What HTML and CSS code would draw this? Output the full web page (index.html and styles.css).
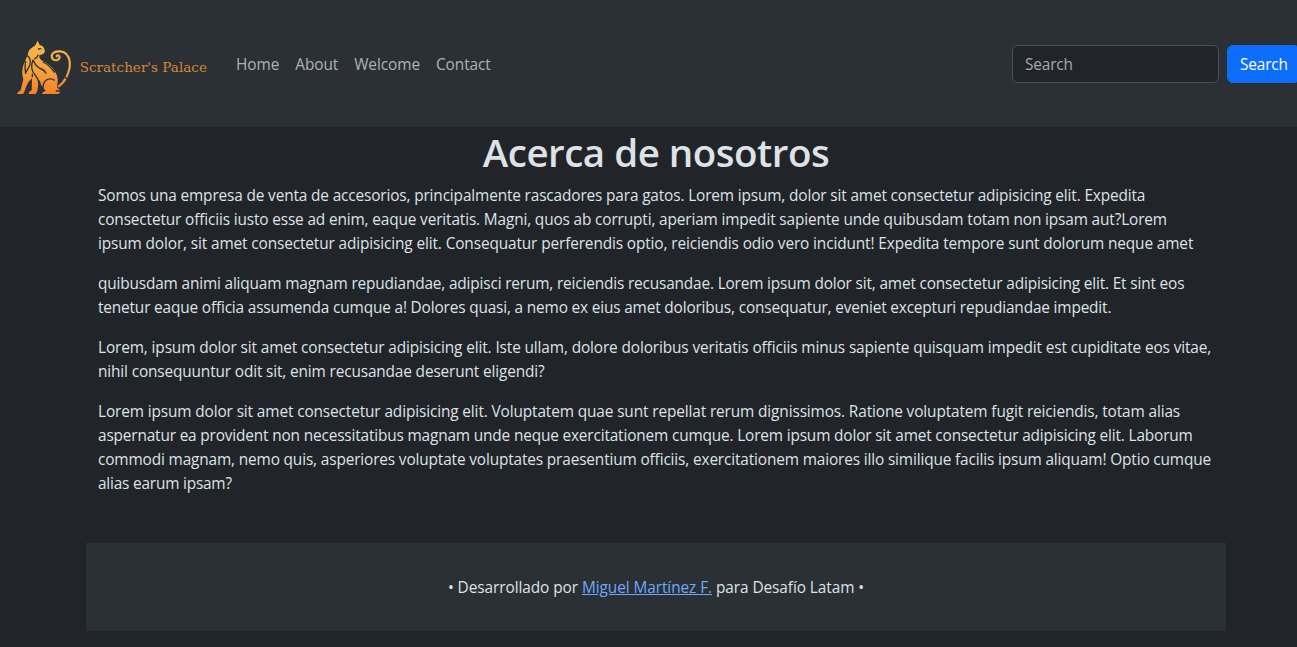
FILE: index.html
```html
<!DOCTYPE html>
<html lang="es">
<head>
<meta charset="utf-8">
<title>Acerca de nosotros</title>
<link rel="stylesheet" href="styles.css">
</head>
<body>
<div class="page">
<nav class="navbar">
  <a class="brand" href="#">
    <svg width="200" height="66" viewBox="0 0 600 198">
      <defs><linearGradient id="fur" gradientUnits="userSpaceOnUse" x1="0" y1="20" x2="0" y2="180"><stop offset="0" stop-color="#f9b94a"/><stop offset=".5" stop-color="#f5a53f"/><stop offset="1" stop-color="#f58229"/></linearGradient></defs>
      <path fill="url(#fur)" d="M83 20L89 33Q99 34 102 42L105 52Q102 62 88 64Q86 75 99 82Q124 93 137 116Q146 133 142 151L141 161Q151 166 150 174Q149 180 139 180H96L99 174L107 170Q94 158 87 140Q84 155 82 170L77 180H55L58 173L65 169L66 133Q55 142 49 156L43 173L39 180H21L24 174L32 169L40 136Q33 115 41 91Q48 76 53 62Q55 44 75 35Z"/>
      <path fill="none" stroke="url(#fur)" stroke-width="6.5" stroke-linecap="round" d="M146 157Q160 148 169 130Q182 104 179 82Q174 54 151 52Q127 51 125 66Q127 82 142 78Q153 72 147 65Q141 62 140 67"/>
      <path fill="none" stroke="#2b3035" stroke-width="4" d="M50 64Q64 70 60 92Q53 107 45 119M47 81Q43 105 48 119M69 77Q58 105 76 124Q87 137 88 153M70 79Q77 99 94 105Q105 109 108 119M85 62Q82 72 73 75M100 174Q96 149 108 139Q119 130 134 139M88 140Q90 160 103 171M98 84Q118 92 134 116M67 130L67 119M137 171H150M164 130L178 137M84 45L94 44"/>
      <text class="brand-name" x="209" y="115" textLength="382" lengthAdjust="spacingAndGlyphs">Scratcher's Palace</text>
    </svg>
  </a>
  <div class="links"><a href="#">Home</a><a href="#">About</a><a href="#">Welcome</a><a href="#">Contact</a></div>
  <form class="search"><input type="search" placeholder="Search" aria-label="Search"><button type="button">Search</button></form>
</nav>
<main class="container">
  <h1>Acerca de nosotros</h1>
  <p><span class="line l1">Somos una empresa de venta de accesorios, principalmente rascadores para gatos. Lorem ipsum, dolor sit amet consectetur adipisicing elit. Expedita</span>
  <span class="line l2">consectetur officiis iusto esse ad enim, eaque veritatis. Magni, quos ab corrupti, aperiam impedit sapiente unde quibusdam totam non ipsam aut?Lorem</span>
  <span class="line l3">ipsum dolor, sit amet consectetur adipisicing elit. Consequatur perferendis optio, reiciendis odio vero incidunt! Expedita tempore sunt dolorum neque amet</span></p>
  <p><span class="line l4">quibusdam animi aliquam magnam repudiandae, adipisci rerum, reiciendis recusandae. Lorem ipsum dolor sit, amet consectetur adipisicing elit. Et sint eos</span>
  <span class="line l5">tenetur eaque officia assumenda cumque a! Dolores quasi, a nemo ex eius amet doloribus, consequatur, eveniet excepturi repudiandae impedit.</span></p>
  <p><span class="line l6">Lorem, ipsum dolor sit amet consectetur adipisicing elit. Iste ullam, dolore doloribus veritatis officiis minus sapiente quisquam impedit est cupiditate eos vitae,</span>
  <span class="line l7">nihil consequuntur odit sit, enim recusandae deserunt eligendi?</span></p>
  <p><span class="line l8">Lorem ipsum dolor sit amet consectetur adipisicing elit. Voluptatem quae sunt repellat rerum dignissimos. Ratione voluptatem fugit reiciendis, totam alias</span>
  <span class="line l9">aspernatur ea provident non necessitatibus magnam unde neque exercitationem cumque. Lorem ipsum dolor sit amet consectetur adipisicing elit. Laborum</span>
  <span class="line l10">commodi magnam, nemo quis, asperiores voluptate voluptates praesentium officiis, exercitationem maiores illo similique facilis ipsum aliquam! Optio cumque</span>
  <span class="line l11">alias earum ipsam?</span></p>
</main>
<footer class="footer">• Desarrollado por <a href="#">Miguel Martínez F.</a> para Desafío Latam •</footer>
</div>
</body>
</html>
```
FILE: styles.css
```css
* { box-sizing: border-box; }
html { overflow: hidden; background: #212529; }
body { margin: 0; font: 15.4px/24px "Open Sans", "Noto Sans", sans-serif; color: #dee2e6; }
.page { width: 1312px; height: 647px; }
.navbar { display: flex; align-items: center; height: 127px; padding: 0 12px 2px 10px; background: #2b3035; }
.brand { display: flex; margin-top: 8px; text-decoration: none; }
.brand-name { font: 41px "DejaVu Serif", serif; fill: #d78735; }
.links { display: flex; gap: 16px; margin: 4px 0 0 26px; letter-spacing: -.07px; }
.links a { color: #afb2b5; text-decoration: none; }
.search { display: flex; gap: 8px; margin: 2px 0 0 auto; }
.search input { width: 207px; height: 38px; padding: 7px 12px 5px; border: 1px solid #495057; border-radius: 6px; background: #212529; color: #dee2e6; font: inherit; letter-spacing: -.15px; }
.search input::placeholder { color: #a6a9ad; opacity: 1; }
.search button { width: 73px; height: 38px; padding: 7px 12px 5px; border: 1px solid #0d6efd; border-radius: 6px; background: #0d6efd; color: #fff; font: inherit; letter-spacing: -.15px; }
.container { width: 1140px; margin: 0 auto; padding: 1px 12px 0; }
h1 { margin: 0 0 8px; font-size: 38.5px; font-weight: 600; line-height: 48px; letter-spacing: -.5px; text-align: center; }
p { margin: 0 0 16px; }
.line { display: block; white-space: nowrap; letter-spacing: -.145px; }
.l3 { letter-spacing: -.125px; }
.l4, .l5 { letter-spacing: -.165px; }
.l6, .l8 { letter-spacing: -.125px; }
.l9 { letter-spacing: -.163px; }
.l11 { letter-spacing: -.2px; }
.footer { width: 1140px; height: 88px; margin: 47px auto 0; padding-top: 33px; background: #2b3035; letter-spacing: -.07px; text-align: center; }
.footer a { color: #6ea8fe; }
```
